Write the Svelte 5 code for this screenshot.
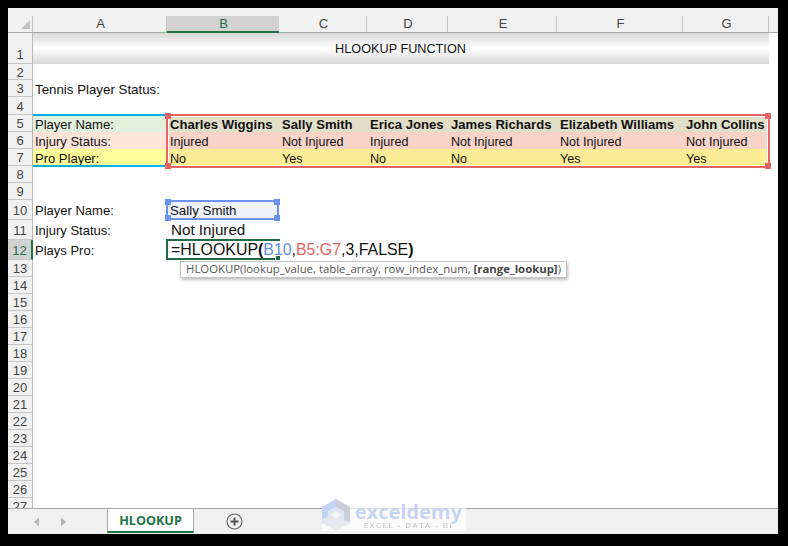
<script>
  const cols = ['A', 'B', 'C', 'D', 'E', 'F', 'G'];
  const rows = Array.from({ length: 27 }, (_, i) => i + 1);
  const table = [
    { label: 'Player Name:', tone: 'name', values: ['Charles Wiggins', 'Sally Smith', 'Erica Jones', 'James Richards', 'Elizabeth Williams', 'John Collins'] },
    { label: 'Injury Status:', tone: 'injury', values: ['Injured', 'Not Injured', 'Injured', 'Not Injured', 'Not Injured', 'Not Injured'] },
    { label: 'Pro Player:', tone: 'pro', values: ['No', 'Yes', 'No', 'No', 'Yes', 'Yes'] }
  ];
</script>

<div class="page">
  <div class="window">
    <div class="sheet">
      <div class="corner"><span class="tri"></span></div>
      {#each cols as c}
        <div class="colhead" class:active={c === 'B'}>{c}</div>
      {/each}
      <div class="colrest"></div>

      {#each rows as r}
        <div class="rowhead" class:active={r === 12} class:low={r === 1} style="grid-row: {r + 1}">{r}</div>
      {/each}

      <div class="title">HLOOKUP FUNCTION</div>
      <div class="cell a lead" style="grid-row: 4">Tennis Player Status:</div>

      {#each table as row, i}
        <div class="cell a shift {row.tone}" style="grid-row: {i + 6}">{row.label}</div>
        {#each row.values as v, j}
          <div class="cell d shift {row.tone}2" class:bold={i === 0} style="grid-row: {i + 6}; grid-column: {j + 3}">{v}</div>
        {/each}
      {/each}

      <div class="cell a" style="grid-row: 11">Player Name:</div>
      <div class="cell d b10" style="grid-row: 11; grid-column: 3">Sally Smith</div>
      <div class="cell a" style="grid-row: 12">Injury Status:</div>
      <div class="cell big plain" style="grid-row: 12; grid-column: 3">Not Injured</div>
      <div class="cell a" style="grid-row: 13">Plays Pro:</div>
      <div class="cell big formula" style="grid-row: 13; grid-column: 3">=HLOOKUP<b>(</b><span class="ref-b">B10</span>,<span class="ref-r">B5:G7</span>,3,FALSE<b>)</b></div>

      <div class="sel sel-a"></div>
      <div class="sel sel-r">
        <i class="h tl"></i><i class="h tr"></i><i class="h bl"></i><i class="h br"></i>
      </div>
      <div class="sel sel-b">
        <i class="h tl"></i><i class="h tr"></i><i class="h bl"></i><i class="h br"></i>
      </div>
      <div class="sel sel-g"><i class="notch"></i></div>

      <div class="tip">HLOOKUP(lookup_value, table_array, row_index_num, <b>[range_lookup]</b>)</div>
    </div>

    <div class="tabs">
      <div class="nav">
        <svg width="40" height="12" viewBox="0 0 40 12"><path d="M9 1.5 4 6l5 4.5z" fill="#b4b4b4" /><path d="M31 1.5 36 6l-5 4.5z" fill="#b4b4b4" /></svg>
      </div>
      <div class="tab">HLOOKUP</div>
      <button class="add" aria-label="New sheet">
        <svg width="17" height="17" viewBox="0 0 17 17"><circle cx="8.5" cy="8.5" r="7.5" fill="none" stroke="#666" stroke-width="1.2" /><path d="M8.5 4.5v8M4.5 8.5h8" stroke="#555" stroke-width="2" /></svg>
      </button>
    </div>

    <div class="mark">
      <svg class="logo" width="28" height="32" viewBox="0 0 28 32">
        <path d="M14 0 28 8v16l-14 8L0 24V8z" fill="#dfe6f2" />
        <path d="M14 0 0 8v12l6 3V12l8-4z" fill="#c3d2f2" />
        <path d="M14 0 28 8v14l-6 2V12l-8-4z" fill="#c9ced8" />
        <path d="M0 20l14 12 14-8-14-8z" fill="#e3e9ef" />
        <path d="M9 15l5-3 5 3-5 4z" fill="#f4f6fa" />
      </svg>
      <div class="brand">
        <div class="b1">exceldemy</div>
        <div class="b2">EXCEL - DATA - BI</div>
      </div>
    </div>
  </div>
</div>

<style>
  :global(body) { margin: 0; background: #000; }
  .page {
    width: 788px;
    height: 546px;
    box-sizing: border-box;
    padding: 8px 10px 12px 8px;
    background: #000;
    font-family: "Liberation Sans", Arial, sans-serif;
    overflow: hidden;
  }
  .window {
    position: relative;
    width: 770px;
    height: 526px;
    background: #fff;
    display: flex;
    flex-direction: column;
    overflow: hidden;
  }
  .sheet {
    position: relative;
    flex: 0 0 500px;
    overflow: hidden;
    display: grid;
    grid-template-columns: 25px 134px 112px 88px 81px 109px 126px 86px 9px;
    grid-template-rows: 25px 31px 16px 17px 18px repeat(5, 17px) repeat(3, 20px) repeat(15, 17px);
    font-size: 13px;
    color: #111;
  }
  .corner {
    grid-row: 1;
    grid-column: 1;
    position: relative;
    background: #f1f1f1;
    border-bottom: 1px solid #a8a8a8;
    box-sizing: border-box;
  }
  .corner::after, .colhead::after {
    content: "";
    position: absolute;
    right: 0;
    top: 8px;
    bottom: 0;
    width: 1px;
    background: #c6c6c6;
  }
  .tri {
    position: absolute;
    right: 3px;
    bottom: 3px;
    width: 0;
    height: 0;
    border-left: 9px solid transparent;
    border-bottom: 9px solid #c2c2c2;
  }
  .colhead {
    position: relative;
    grid-row: 1;
    background: #f1f1f1;
    border-bottom: 1px solid #a8a8a8;
    box-sizing: border-box;
    padding: 8px 0 0 1px;
    text-align: center;
    font-size: 13px;
    line-height: 16px;
    color: #444;
  }
  .colhead.active {
    background: linear-gradient(#f1f1f1 8px, #d2d2d2 8px);
    color: #217346;
    border-bottom: 2px solid #217346;
  }
  .colhead.active::after { background: #d2d2d2; }
  .colrest {
    grid-row: 1;
    background: #f1f1f1;
    border-bottom: 1px solid #a8a8a8;
  }
  .rowhead {
    grid-column: 1;
    background: #f1f1f1;
    border-right: 1px solid #b8b8b8;
    border-bottom: 1px solid #c6c6c6;
    box-sizing: border-box;
    padding-top: 1px;
    display: flex;
    align-items: center;
    justify-content: center;
    font-size: 13px;
    color: #444;
  }
  .rowhead.low { align-items: flex-end; padding: 0 0 1px; }
  .rowhead.active {
    background: #d2d2d2;
    color: #217346;
    border-right: 2px solid #217346;
  }
  .title {
    grid-row: 2;
    grid-column: 2 / 9;
    display: flex;
    align-items: center;
    justify-content: center;
    padding-right: 1px;
    font-size: 12.7px;
    background: linear-gradient(#d8d8d8, #ffffff 50%, #d8d8d8);
  }
  .cell {
    white-space: nowrap;
    display: flex;
    align-items: center;
    min-width: 0;
  }
  .cell.a { grid-column: 2; padding-left: 2px; }
  .cell.d { padding-left: 3px; font-size: 12.6px; }
  .cell.shift { padding-top: 1px; }
  .cell.d.shift { padding-top: 2px; }
  .cell.lead { font-size: 13.3px; padding-top: 1px; }
  .cell.d.bold { font-weight: 700; font-size: 13.1px; padding-top: 1px; }
  .name { background: #e2efda; }
  .injury { background: #fde4d9; }
  .pro { background: #ffff99; }
  .name2 { background: #e2dfc9; }
  .injury2 { background: #f8d3c8; }
  .pro2 { background: #fdec96; }
  .cell.b10 { background: #eef2fc; font-size: 13.3px; }
  .big { font-size: 15.2px; padding-left: 4px; }
  .big.plain { padding-bottom: 2px; }
  .formula { position: relative; z-index: 5; font-size: 15.9px; }
  .formula b { font-weight: 700; }
  .ref-b { color: #5e8fe8; }
  .ref-r { color: #ea5f5f; }
  .sel { position: absolute; box-sizing: border-box; z-index: 3; pointer-events: none; }
  .sel-a {
    left: 25px;
    top: 106px;
    width: 132px;
    height: 53px;
    border-top: 2px solid #00b0f0;
    border-bottom: 2px solid #00b0f0;
  }
  .sel-r {
    left: 158px;
    top: 106px;
    width: 604px;
    height: 54px;
    border: 2px solid #e86464;
    box-shadow: inset 0 0 0 1px #fff;
  }
  .sel-b {
    left: 158px;
    top: 192px;
    width: 113px;
    height: 20px;
    border: 2px solid #6b93ee;
  }
  .sel-g {
    left: 158px;
    top: 231px;
    width: 114px;
    height: 21px;
    border: 2px solid #1f6b45;
    border-right: 0;
  }
  .notch {
    position: absolute;
    right: 0;
    bottom: -2px;
    width: 4px;
    height: 4px;
    background: #1f6b45;
    border-left: 1px solid #fff;
  }
  .h {
    position: absolute;
    width: 6px;
    height: 6px;
  }
  .sel-r .h { background: #e86464; }
  .sel-b .h { background: #6b93ee; }
  .tl { left: -3px; top: -3px; }
  .tr { right: -3px; top: -3px; }
  .bl { left: -3px; bottom: -3px; }
  .br { right: -3px; bottom: -3px; }
  .tip {
    position: absolute;
    z-index: 4;
    left: 172px;
    top: 253px;
    width: 387px;
    height: 17px;
    box-sizing: border-box;
    background: #fff;
    border: 1px solid #c4c4c4;
    box-shadow: 1px 2px 3px rgba(0, 0, 0, 0.25);
    padding-left: 5px;
    font-family: "Open Sans", sans-serif;
    font-size: 11.36px;
    line-height: 14px;
    color: #555;
    white-space: nowrap;
  }
  .tip b { color: #444; }
  .tabs {
    flex: 1;
    display: flex;
    align-items: stretch;
    background: #f0f0f0;
    border-top: 1px solid #a8a8a8;
    box-sizing: border-box;
  }
  .nav {
    width: 99px;
    display: flex;
    align-items: center;
    padding-left: 22px;
    box-sizing: border-box;
  }
  .tab {
    width: 87px;
    margin-top: -1px;
    box-sizing: border-box;
    background: #fff;
    border: 1px solid #a8a8a8;
    border-bottom: 2px solid #217346;
    margin-bottom: 1px;
    display: flex;
    align-items: center;
    justify-content: center;
    font-family: "Open Sans", sans-serif;
    font-weight: 700;
    font-size: 12.6px;
    color: #217346;
  }
  .add {
    margin: 0 0 0 32px;
    padding: 0;
    border: 0;
    background: none;
    display: flex;
    align-items: center;
  }
  .mark {
    position: absolute;
    left: 314px;
    top: 491px;
    width: 144px;
    height: 32px;
    display: flex;
    gap: 5px;
    background: rgba(255, 255, 255, 0.7);
    filter: blur(0.4px);
  }
  .logo { flex: none; }
  .brand { display: flex; flex-direction: column; align-items: center; padding-top: 4px; }
  .b1 {
    font-family: "Open Sans", sans-serif;
    font-weight: 700;
    font-size: 20px;
    line-height: 18px;
    color: #c6d4f2;
  }
  .b2 {
    font-family: "Open Sans", sans-serif;
    font-size: 8px;
    line-height: 7px;
    letter-spacing: 1.5px;
    color: #c0c0c0;
  }
</style>
